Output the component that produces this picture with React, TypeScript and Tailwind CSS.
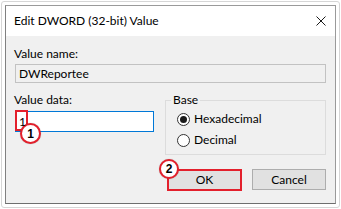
import React from "react";

function Badge({ n, className }: { n: string; className: string }) {
  return (
    <div
      className={
        "absolute rounded-full bg-white border-2 border-[#e3202c] flex items-center justify-center font-['Liberation_Sans',sans-serif] font-bold text-[12px] leading-none text-black shadow-[0_0_1px_rgba(0,0,0,0.3)] " +
        className
      }
    >
      {n}
    </div>
  );
}

function Radio({ checked, label }: { checked: boolean; label: string }) {
  return (
    <div className="h-[16px] flex items-center">
      <span className="w-[13px] h-[13px] rounded-full border border-[#333333] bg-white flex items-center justify-center">
        {checked && <span className="w-[7px] h-[7px] rounded-full bg-[#1a1a1a]" />}
      </span>
      <span className="ml-[4px]">{label}</span>
    </div>
  );
}

export default function App() {
  return (
    <div className="w-[341px] h-[209px] bg-white p-[1px] font-['Lato',sans-serif] text-[12px] leading-[16px] text-black">
      <div className="h-full rounded-[3px] border border-[#d6d6d6] p-[3px]">
        <div className="h-full flex flex-col border border-[#9a9a9a] border-b-[#6e6e6e] border-l-[#808080]">
          <div className="h-[30px] shrink-0 bg-white flex items-center justify-between pl-[8px] pr-[9px]">
            <span>Edit DWORD (32-bit) Value</span>
            <svg width="10" height="10" viewBox="0 0 10 10">
              <path d="M0.5 0.5L9.5 9.5M9.5 0.5L0.5 9.5" stroke="#1a1a1a" strokeWidth="1" />
            </svg>
          </div>
          <div className="flex-1 bg-[#f0f0f0] pl-[9px] pr-[9px] pt-[10px]">
            <div className="-ml-[1px]">Value name:</div>
            <div className="mt-[2px] h-[19px] border border-[#c2c2c2] bg-[#f0f0f0] pl-[3px] flex items-center">
              DWReportee
            </div>
            <div className="mt-[9px] flex gap-[11px]">
              <div className="w-[139px] shrink-0">
                <div className="-ml-[1px]">Value data:</div>
                <div className="relative mt-[3px] h-[21px] border border-[#0078d7] bg-white pl-[3px] flex items-center">
                  <span className="relative z-10">1</span>
                  <div className="absolute -left-px -top-[2px] w-[13px] h-[21px] border-2 border-[#e3202c]" />
                  <Badge n="1" className="left-[4px] top-[11px] w-[21px] h-[21px]" />
                </div>
              </div>
              <fieldset className="flex-1 h-[63px] border border-[#dcdcdc] m-0 p-0">
                <legend className="ml-[5px] px-[2px]">Base</legend>
                <div className="pl-[11px] pt-[3px] flex flex-col gap-[5px]">
                  <Radio checked label="Hexadecimal" />
                  <Radio checked={false} label="Decimal" />
                </div>
              </fieldset>
            </div>
            <div className="mt-[14px] flex justify-end items-start gap-[10px]">
              <div className="relative w-[75px] h-[22px] border-2 border-[#e3202c] bg-[#e1e1e1] flex items-center justify-center">
                OK
                <Badge n="2" className="-left-[10px] -top-[12px] w-[20px] h-[20px]" />
              </div>
              <div className="w-[74px] h-[21px] border border-[#adadad] bg-[#e1e1e1] flex items-center justify-center">
                Cancel
              </div>
            </div>
          </div>
        </div>
      </div>
    </div>
  );
}
